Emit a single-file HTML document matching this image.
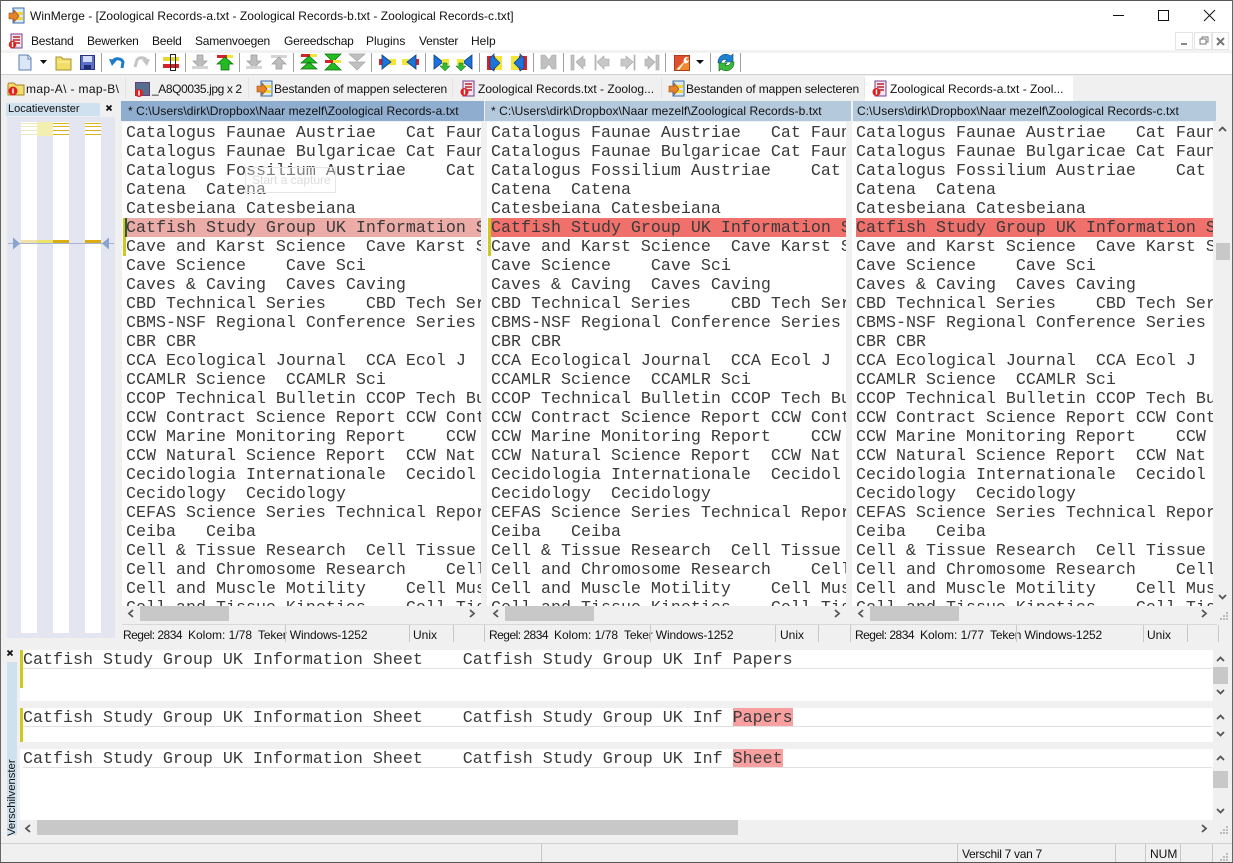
<!DOCTYPE html>
<html lang="nl"><head><meta charset="utf-8"><title>WinMerge</title>
<style>
html,body{margin:0;padding:0;background:#f0f0f0}
#w{position:relative;width:1233px;height:863px;overflow:hidden;background:#f0f0f0;font:12px/16px "Liberation Sans",sans-serif;color:#111}
#w div,#w pre,#w span.a,#w svg.a{position:absolute}
.u{white-space:nowrap}
.m{letter-spacing:-.22px}
.r{letter-spacing:-.52px}
.t{letter-spacing:-.15px}
pre{margin:0;font:16.66px/19px "Liberation Mono",monospace;color:#3a3a3a;white-space:pre;overflow:hidden}
.hd{top:101px;height:20px;line-height:20px;white-space:nowrap;overflow:hidden;font-size:12px;letter-spacing:.065px}
.sep{width:1px;background:#c8c8c8}
.tsep{top:53px;height:19px;width:1px;background:#a0a0a0}
.tabsep{top:78px;height:20px;width:1px;background:#e4e4e4}
.thumb{background:#c8c8c8}
</style></head><body><div id="w">

<!-- window frame -->
<div style="left:0;top:0;width:1233px;height:1px;background:#555"></div>
<div style="left:0;top:1px;width:1233px;height:49px;background:#fff"></div>
<div style="left:0;top:50px;width:1233px;height:3px;background:#f2f2f2"></div>
<div style="left:0;top:53px;width:1233px;height:21px;background:#fff"></div>
<div style="left:0;top:74px;width:1233px;height:1px;background:#d0d0d0"></div>
<div style="left:0;top:0;width:1px;height:863px;background:#666"></div>
<div style="left:1232px;top:0;width:1px;height:863px;background:#666"></div>
<div style="left:0;top:862px;width:1233px;height:1px;background:#555"></div>

<!-- title -->
<svg class="a" style="left:8px;top:7px" width="18" height="18" viewBox="0 0 18 18"><rect x="5" y="1" width="11" height="15" fill="#dbe8f6" stroke="#3d6ea8"/><rect x="8" y="5" width="7" height="3" fill="#f2d33a"/><rect x="8" y="10" width="7" height="3" fill="#f2d33a"/><path d="M1 6h5V3l5 6-5 6v-3H1z" fill="#e8822a" stroke="#8a4a16" stroke-width=".6"/></svg>
<div class="u" style="left:30px;top:8px;font-size:12px;letter-spacing:.03px">WinMerge - [Zoological Records-a.txt - Zoological Records-b.txt - Zoological Records-c.txt]</div>
<svg class="a" style="left:1100px;top:5px" width="125" height="20" viewBox="0 0 125 20" fill="none" stroke="#111"><path d="M13 10.500h11"/><rect x="58.500" y="5.500" width="10" height="10"/><path d="M104 5l11 11M115 5l-11 11"/></svg>

<!-- menu -->
<svg class="a" style="left:8px;top:33px" width="16" height="16" viewBox="0 0 16 16"><rect x="3" y="1" width="11" height="14" fill="#f3e6f0" stroke="#7a3b8a"/><path d="M5 4h7M5 7h7M5 10h7" stroke="#b22" stroke-width="1.400"/><circle cx="4.500" cy="11.500" r="3.800" fill="#d22"/><path d="M4.500 9v5" stroke="#fff" stroke-width="1.400"/></svg>
<div class="u m" style="left:31px;top:33px">Bestand</div>
<div class="u m" style="left:87px;top:33px">Bewerken</div>
<div class="u m" style="left:152px;top:33px">Beeld</div>
<div class="u m" style="left:195px;top:33px">Samenvoegen</div>
<div class="u m" style="left:284px;top:33px">Gereedschap</div>
<div class="u" style="left:366px;top:33px">Plugins</div>
<div class="u m" style="left:419px;top:33px">Venster</div>
<div class="u" style="left:471px;top:33px">Help</div>
<!-- mdi buttons -->
<svg class="a" style="left:1175px;top:31px" width="54" height="20" viewBox="0 0 54 20" fill="none"><rect x=".5" y="1.500" width="17" height="17" stroke="#e4e4e4"/><rect x="19.500" y="1.500" width="17" height="17" stroke="#e4e4e4"/><rect x="37.500" y="1.500" width="16" height="17" stroke="#e4e4e4"/><path d="M6 13h6" stroke="#888" stroke-width="2"/><path d="M25 8h6v5h-6zM27 8V6h6v5h-2" stroke="#777"/><path d="M42 7l7 7M49 7l-7 7" stroke="#777" stroke-width="2"/></svg>

<!-- toolbar -->
<svg class="a" style="left:0;top:50px" width="760" height="24" viewBox="0 0 760 24">
<defs>
<g id="gd"><path d="M-3-7h6v6h4l-7 7-7-7h4z" fill="#bdbdbd" stroke="#9a9a9a" stroke-width=".7"/><path d="M-8 4h16v3h-16z" fill="#d4d4d4"/></g>
<g id="gu"><path d="M-8-7h16v3h-16z" fill="#d4d4d4"/><path d="M0-5l7 7h-4v5h-6V2h-4z" fill="#bdbdbd" stroke="#9a9a9a" stroke-width=".7"/></g>
<g id="br"><rect x="-8" y="-3" width="5" height="6" fill="#d9232b"/><rect x="2" y="-3" width="7" height="6" fill="#f2e638"/><path d="M-5-7v14l9-7z" fill="#1e73d8" stroke="#0d3f86" stroke-width=".8"/></g>
</defs>
<!-- new -->
<path d="M19 5h9l3 3v12H19z" fill="#dbe6f6" stroke="#5b7fb5"/><path d="M28 5v4h3" fill="#fff" stroke="#5b7fb5"/>
<path d="M40 10h7l-3.500 4z" fill="#111"/>
<!-- open -->
<path d="M56 7v13h15V9h-8l-2-2z" fill="#f0dd6a" stroke="#a8902a"/><path d="M57 12h13" stroke="#fff4a8"/>
<!-- save -->
<rect x="80.500" y="5.500" width="14" height="14" fill="#5a6fc8" stroke="#27337f"/><rect x="83" y="6" width="9" height="6" fill="#d5dcf7"/><rect x="84" y="15" width="7" height="4" fill="#1e2a72"/>
<!-- undo/redo -->
<path d="M113 11a5.500 4.500 0 0 1 10 1l-1 6" fill="none" stroke="#1d7bc8" stroke-width="3"/><path d="M109 9l8 1-5 6z" fill="#1d7bc8"/>
<path d="M147 11a5.500 4.500 0 0 0-10-1l-2 7" fill="none" stroke="#c4c4c4" stroke-width="3"/><path d="M150 9l-8 1 5 6z" fill="#c4c4c4"/>
<!-- options -->
<rect x="163" y="7" width="16" height="4" fill="#e8d92e"/><rect x="163" y="14" width="16" height="4" fill="#d32228"/><rect x="170.500" y="4.500" width="5" height="16" fill="none" stroke="#222"/>
<!-- down gray / up green -->
<use href="#gd" x="200" y="12"/>
<path d="M217 5h10v3h-10z" fill="#d32228"/><path d="M227 5h6v3h-6z" fill="#f2e638"/>
<path d="M225 7l8 7h-4v6h-8v-6h-4z" fill="#22bb22" stroke="#0a6a0a" stroke-width=".7"/>
<use href="#gd" x="254" y="12"/><use href="#gu" x="279" y="12"/>
<!-- green triple -->
<path d="M301 4h9v3h-9z" fill="#d32228"/><path d="M310 4h7v3h-7z" fill="#f2e638"/><path d="M309 6l8 7h-16zM309 12l8 7h-16z" fill="#22bb22" stroke="#0a6a0a" stroke-width=".7"/>
<path d="M325 4h16l-8 8zM325 20h16l-8-8z" fill="#22bb22" stroke="#0a6a0a" stroke-width=".7"/><path d="M325 10h8v3h-8z" fill="#d32228"/><path d="M333 10h8v3h-8z" fill="#f2e638"/>
<path d="M349 4h16l-8 7zM349 12h16l-8 8z" fill="#c0c0c0" stroke="#a4a4a4" stroke-width=".7"/>
<!-- blue arrows -->
<use href="#br" transform="translate(387 12)"/><use href="#br" transform="translate(411 12) scale(-1 1)"/>
<path d="M434 5v14l9-7z" fill="#1e73d8" stroke="#0d3f86" stroke-width=".8"/><rect x="442" y="9" width="7" height="6" fill="#f2e638"/><path d="M443 13h4v3h3l-5 5-5-5h3z" fill="#33bb33" stroke="#0a6a0a" stroke-width=".5"/>
<path d="M472 5v14l-9-7z" fill="#1e73d8" stroke="#0d3f86" stroke-width=".8"/><rect x="457" y="9" width="7" height="6" fill="#f2e638"/><path d="M459 13h4v3h3l-5 5-5-5h3z" fill="#33bb33" stroke="#0a6a0a" stroke-width=".5"/>
<!-- red-blue-yellow -->
<rect x="487" y="6" width="8" height="14" fill="#d32228"/><rect x="495" y="6" width="7" height="14" fill="#f2e638"/><path d="M490 8l4-4v4h1l5 5-5 5h-1v3l-4-3z" fill="#1e73d8" stroke="#0d3f86" stroke-width=".7"/>
<rect x="511" y="6" width="8" height="14" fill="#f2e638"/><rect x="519" y="6" width="8" height="14" fill="#d32228"/><path d="M524 8l-4-4v4h-1l-5 5 5 5h1v3l4-3z" fill="#1e73d8" stroke="#0d3f86" stroke-width=".7"/>
<!-- gray -->
<path d="M541 5h4l4 5 3-5h4v14h-4l-3-5-4 5h-4z" fill="#c0c0c0" stroke="#a8a8a8" stroke-width=".6"/>
<path d="M571 5h3v15h-3zM576 12l7-6v3h2v7h-2v3z" fill="#c2c2c2" stroke="#a4a4a4" stroke-width=".6"/>
<path d="M595 5h1v15h-1zM597 12l7-6v3h5v7h-5v3z" fill="#c8c8c8" stroke="#a4a4a4" stroke-width=".6"/>
<path d="M634 5h1v15h-1zM633 12l-7-6v3h-5v7h5v3z" fill="#c8c8c8" stroke="#a4a4a4" stroke-width=".6"/>
<path d="M656 5h3v15h-3zM655 12l-7-6v3h-3v7h3v3z" fill="#c2c2c2" stroke="#a4a4a4" stroke-width=".6"/>
<!-- wrench -->
<rect x="674.500" y="5.500" width="15" height="15" fill="#ee8a2c" stroke="#b03a20"/><path d="M675 6h14L675 20z" fill="#e0502c"/><path d="M677 19l7-7a3.500 3.500 0 0 1 4-5l-2 2 1 2 2-1a3.500 3.500 0 0 1-5 3l-5 7z" fill="#fff"/>
<path d="M696 10h8l-4 4z" fill="#111"/>
<!-- refresh -->
<path d="M718 13a8 8 0 0 1 13-7l2-2v8h-8l2-2a4 4 0 0 0-6 3z" fill="#1f80d0" stroke="#0d4f88" stroke-width=".6"/><path d="M734 12a8 8 0 0 1-13 7l-2 2v-8h8l-2 2a4 4 0 0 0 6-3z" fill="#3cb83c" stroke="#0d6a0d" stroke-width=".6"/>
</svg>
<div class="tsep" style="left:101px"></div><div class="tsep" style="left:155px"></div><div class="tsep" style="left:185px"></div><div class="tsep" style="left:239px"></div><div class="tsep" style="left:293px"></div><div class="tsep" style="left:371px"></div><div class="tsep" style="left:425px"></div><div class="tsep" style="left:479px"></div><div class="tsep" style="left:533px"></div><div class="tsep" style="left:563px"></div><div class="tsep" style="left:665px"></div><div class="tsep" style="left:710px"></div><div class="tsep" style="left:740px"></div>

<!-- tabs -->
<div style="left:865px;top:76px;width:208px;height:25px;background:#fff"></div>
<div class="tabsep" style="left:125px"></div><div class="tabsep" style="left:248px"></div><div class="tabsep" style="left:452px"></div><div class="tabsep" style="left:661px"></div><div class="tabsep" style="left:864px"></div>
<svg class="a" style="left:0;top:78px" width="900" height="22" viewBox="0 0 900 22">
<defs>
<g id="tb"><rect x="5" y="3" width="11" height="15" fill="#dbe8f6" stroke="#3d6ea8"/><rect x="8" y="7" width="7" height="3" fill="#f2d33a"/><rect x="8" y="12" width="7" height="3" fill="#f2d33a"/><path d="M1 8h5V5l5 6-5 6v-3H1z" fill="#e8822a" stroke="#8a4a16" stroke-width=".6"/></g>
<g id="td"><rect x="3" y="3" width="11" height="15" fill="#f3e6f0" stroke="#7a3b8a"/><path d="M5 6h7M5 9h7M5 12h7" stroke="#b22" stroke-width="1.400"/><circle cx="4.500" cy="14" r="4" fill="#d22"/><path d="M4.500 11.500v5" stroke="#fff" stroke-width="1.400"/></g>
</defs>
<path d="M8 6v11h16V7h-8l-2-2H9z" fill="#f0dd6a" stroke="#a8802a"/><circle cx="13" cy="13" r="4.500" fill="#d22"/><path d="M13 10.500v5" stroke="#fff" stroke-width="1.400"/>
<rect x="135.500" y="4.500" width="14" height="13" fill="#54708e" stroke="#6a3b7a"/><circle cx="139" cy="15" r="4" fill="#d22"/><path d="M139 12.500v5" stroke="#fff" stroke-width="1.400"/>
<use href="#tb" x="256"/><use href="#td" x="460"/><use href="#tb" x="668"/><use href="#td" x="872"/>
</svg>
<div class="u" style="left:26px;top:81px;letter-spacing:.35px">map-A\ - map-B\</div>
<div class="u" style="left:152px;top:81px;letter-spacing:-.4px">_A8Q0035.jpg x 2</div>
<div class="u" style="left:274px;top:81px;letter-spacing:-.1px">Bestanden of mappen selecteren</div>
<div class="u" style="left:478px;top:81px">Zoological Records.txt - Zoolog...</div>
<div class="u" style="left:686px;top:81px;letter-spacing:-.1px">Bestanden of mappen selecteren</div>
<div class="u" style="left:890px;top:81px">Zoological Records-a.txt - Zool...</div>

<!-- location pane -->
<div class="u" style="left:6px;top:103px;width:94px;height:13px;line-height:13px;background:#cfe0ee;font-size:11px;padding-left:2px;box-sizing:border-box">Locatievenster</div>
<svg class="a" style="left:105px;top:104px" width="9" height="9" viewBox="0 0 9 9"><path d="M1.500 1.500l5 5M6.500 1.500l-5 5" stroke="#111" stroke-width="1.800"/></svg>
<div style="left:7px;top:117px;width:108px;height:521px;background:#e3e5f1"></div>
<div style="left:21px;top:122px;width:16px;height:511px;background:#fff"></div>
<div style="left:53px;top:122px;width:16px;height:511px;background:#fff"></div>
<div style="left:85px;top:122px;width:16px;height:511px;background:#fff"></div>
<div style="left:37px;top:122px;width:16px;height:14px;background:#f3efb0"></div>
<svg class="a" style="left:21px;top:122px" width="80" height="14" viewBox="0 0 80 14"><path d="M0 1.500h16M0 4.500h16M0 8.500h16M0 12.500h16" stroke="#eee8c0"/><path d="M32 1.500h16M32 4.500h16M32 8.500h16M32 12.500h16M64 1.500h16M64 4.500h16M64 8.500h16M64 12.500h16" stroke="#dcb41e"/></svg>
<div style="left:21px;top:240px;width:16px;height:3px;background:#efe3a8"></div>
<div style="left:37px;top:240px;width:16px;height:3px;background:#ece46a"></div>
<div style="left:53px;top:240px;width:16px;height:3px;background:#dcac14"></div>
<div style="left:85px;top:240px;width:16px;height:3px;background:#dcac14"></div>
<div style="left:8px;top:243px;width:106px;height:1px;background:#a8b4d4"></div>
<svg class="a" style="left:8px;top:237px" width="106" height="13" viewBox="0 0 106 13"><path d="M5 0.500l7 6-7 6zM101 0.500l-7 6 7 6z" fill="#8ba3cc"/></svg>

<!-- pane headers -->
<div class="hd" style="left:121px;width:363px;background:#8fadcf;padding-left:7px;box-sizing:border-box">* C:\Users\dirk\Dropbox\Naar mezelf\Zoological Records-a.txt</div>
<div class="hd" style="left:485px;width:366px;background:#b5c9dc;padding-left:6px;box-sizing:border-box">* C:\Users\dirk\Dropbox\Naar mezelf\Zoological Records-b.txt</div>
<div class="hd" style="left:853px;width:363px;background:#b5c9dc;padding-left:4px;box-sizing:border-box">C:\Users\dirk\Dropbox\Naar mezelf\Zoological Records-c.txt</div>

<!-- text panes backgrounds -->
<div style="left:122px;top:122px;width:359px;height:484px;background:#fff"></div>
<div style="left:487px;top:122px;width:359px;height:484px;background:#fff"></div>
<div style="left:852px;top:122px;width:361px;height:484px;background:#fff"></div>
<div style="left:126px;top:218px;width:355px;height:19px;background:#ecaca8"></div>
<div style="left:491px;top:218px;width:355px;height:19px;background:#f0706c"></div>
<div style="left:856px;top:218px;width:357px;height:19px;background:#f0706c"></div>
<div style="left:123px;top:218px;width:3px;height:38px;background:#cfc81e"></div>
<div style="left:488px;top:218px;width:3px;height:38px;background:#cfc81e"></div>
<div style="left:125px;top:218px;width:2px;height:19px;background:#2f5a35"></div>

<pre style="left:126px;top:124px;width:355px;height:482px">Catalogus Faunae Austriae   Cat Faun
Catalogus Faunae Bulgaricae Cat Faun
Catalogus Fossilium Austriae    Cat Foss
Catena  Catena
Catesbeiana Catesbeiana
Catfish Study Group UK Information Sheet
Cave and Karst Science  Cave Karst Sci
Cave Science    Cave Sci
Caves &amp; Caving  Caves Caving
CBD Technical Series    CBD Tech Ser
CBMS-NSF Regional Conference Series
CBR CBR
CCA Ecological Journal  CCA Ecol J
CCAMLR Science  CCAMLR Sci
CCOP Technical Bulletin CCOP Tech Bull
CCW Contract Science Report CCW Cont
CCW Marine Monitoring Report    CCW Mar
CCW Natural Science Report  CCW Nat
Cecidologia Internationale  Cecidol
Cecidology  Cecidology
CEFAS Science Series Technical Report
Ceiba   Ceiba
Cell &amp; Tissue Research  Cell Tissue
Cell and Chromosome Research    Cell
Cell and Muscle Motility    Cell Mus
Cell and Tissue Kinetics    Cell Tis</pre>
<pre style="left:491px;top:124px;width:355px;height:482px">Catalogus Faunae Austriae   Cat Faun
Catalogus Faunae Bulgaricae Cat Faun
Catalogus Fossilium Austriae    Cat Foss
Catena  Catena
Catesbeiana Catesbeiana
Catfish Study Group UK Information Sheet
Cave and Karst Science  Cave Karst Sci
Cave Science    Cave Sci
Caves &amp; Caving  Caves Caving
CBD Technical Series    CBD Tech Ser
CBMS-NSF Regional Conference Series
CBR CBR
CCA Ecological Journal  CCA Ecol J
CCAMLR Science  CCAMLR Sci
CCOP Technical Bulletin CCOP Tech Bull
CCW Contract Science Report CCW Cont
CCW Marine Monitoring Report    CCW Mar
CCW Natural Science Report  CCW Nat
Cecidologia Internationale  Cecidol
Cecidology  Cecidology
CEFAS Science Series Technical Report
Ceiba   Ceiba
Cell &amp; Tissue Research  Cell Tissue
Cell and Chromosome Research    Cell
Cell and Muscle Motility    Cell Mus
Cell and Tissue Kinetics    Cell Tis</pre>
<pre style="left:856px;top:124px;width:357px;height:482px">Catalogus Faunae Austriae   Cat Faun
Catalogus Faunae Bulgaricae Cat Faun
Catalogus Fossilium Austriae    Cat Foss
Catena  Catena
Catesbeiana Catesbeiana
Catfish Study Group UK Information Sheet
Cave and Karst Science  Cave Karst Sci
Cave Science    Cave Sci
Caves &amp; Caving  Caves Caving
CBD Technical Series    CBD Tech Ser
CBMS-NSF Regional Conference Series
CBR CBR
CCA Ecological Journal  CCA Ecol J
CCAMLR Science  CCAMLR Sci
CCOP Technical Bulletin CCOP Tech Bull
CCW Contract Science Report CCW Cont
CCW Marine Monitoring Report    CCW Mar
CCW Natural Science Report  CCW Nat
Cecidologia Internationale  Cecidol
Cecidology  Cecidology
CEFAS Science Series Technical Report
Ceiba   Ceiba
Cell &amp; Tissue Research  Cell Tissue
Cell and Chromosome Research    Cell
Cell and Muscle Motility    Cell Mus
Cell and Tissue Kinetics    Cell Tis</pre>

<!-- capture ghost -->
<div class="u" style="left:245px;top:167px;width:83px;height:24px;border:1px solid #e6e6e6;line-height:24px;color:#dcdcdc;padding-left:6px;box-sizing:content-box;background:rgba(255,255,255,.35);font-size:12px;overflow:hidden">Start a capture</div>

<!-- h scrollbars -->
<div class="thumb" style="left:140px;top:606px;width:89px;height:15px"></div>
<div class="thumb" style="left:505px;top:606px;width:89px;height:15px"></div>
<div class="thumb" style="left:870px;top:606px;width:89px;height:15px"></div>
<div class="thumb" style="left:1216px;top:243px;width:14px;height:17px"></div>
<svg class="a" style="left:0;top:0" width="1233" height="863" viewBox="0 0 1233 863" fill="none" stroke="#555" stroke-width="1.800">
<path d="M133 610l-4 3.500 4 3.500M470 610l4 3.500-4 3.500M498 610l-4 3.500 4 3.500M835 610l4 3.500-4 3.500M863 610l-4 3.500 4 3.500M1202 610l4 3.500-4 3.500"/>
<path d="M1219 131l3.500-3.500 3.500 3.500M1219 595l3.500 3.500 3.500-3.500"/>
<path d="M1217 661l3.500-3.500 3.500 3.500M1217 690l3.500 3.500 3.500-3.500M1217 719l3.500-3.500 3.500 3.500M1217 732l3.500 3.500 3.500-3.500M1217 760l3.500-3.500 3.500 3.500M1217 809l3.500 3.500 3.500-3.500"/>
<path d="M30 825l-4 3.500 4 3.500M1202 825l4 3.500-4 3.500"/>
</svg>

<!-- pane status -->
<div style="left:122px;top:624px;width:1095px;height:1px;background:#d8d8d8"></div>
<div class="u r" style="left:123px;top:627px">Regel: 2834</div><div class="u" style="left:188px;top:627px">Kolom: 1/78</div><div class="u t" style="left:258px;top:627px">Teker Windows-1252</div><div class="u" style="left:413px;top:627px">Unix</div>
<div class="u r" style="left:489px;top:627px">Regel: 2834</div><div class="u" style="left:554px;top:627px">Kolom: 1/78</div><div class="u t" style="left:624px;top:627px">Teker Windows-1252</div><div class="u" style="left:780px;top:627px">Unix</div>
<div class="u r" style="left:855px;top:627px">Regel: 2834</div><div class="u" style="left:920px;top:627px">Kolom: 1/77</div><div class="u t" style="left:990px;top:627px">Teken Windows-1252</div><div class="u" style="left:1147px;top:627px">Unix</div>
<div class="sep" style="left:285px;top:625px;height:17px"></div><div class="sep" style="left:409px;top:625px;height:17px"></div><div class="sep" style="left:453px;top:625px;height:17px"></div><div class="sep" style="left:484px;top:625px;height:17px"></div>
<div class="sep" style="left:650px;top:625px;height:17px"></div><div class="sep" style="left:775px;top:625px;height:17px"></div><div class="sep" style="left:818px;top:625px;height:17px"></div><div class="sep" style="left:850px;top:625px;height:17px"></div>
<div class="sep" style="left:1016px;top:625px;height:17px"></div><div class="sep" style="left:1143px;top:625px;height:17px"></div><div class="sep" style="left:1187px;top:625px;height:17px"></div><div class="sep" style="left:1218px;top:625px;height:17px"></div>

<!-- diff pane -->
<svg class="a" style="left:6px;top:649px" width="9" height="9" viewBox="0 0 9 9"><path d="M1.500 1.500l5 5M6.500 1.500l-5 5" stroke="#111" stroke-width="1.800"/></svg>
<div style="left:7px;top:662px;width:10px;height:173px;background:#cfe0ee"></div>
<div class="u" style="left:5px;top:836px;width:173px;height:14px;line-height:14px;font-size:11.300px;transform-origin:0 0;transform:rotate(-90deg)">Verschilvenster</div>

<div style="left:20px;top:650px;width:1193px;height:51px;background:#fff"></div>
<div style="left:20px;top:708px;width:1193px;height:34px;background:#fff"></div>
<div style="left:20px;top:749px;width:1193px;height:71px;background:#fff"></div>
<div style="left:23px;top:668px;width:1189px;height:1px;background:#e0e0e0"></div>
<div style="left:23px;top:726px;width:1189px;height:1px;background:#e0e0e0"></div>
<div style="left:23px;top:767px;width:1189px;height:1px;background:#e0e0e0"></div>
<div style="left:20px;top:650px;width:3px;height:38px;background:#cfc81e"></div>
<div style="left:20px;top:708px;width:3px;height:34px;background:#cfc81e"></div>
<div style="left:733px;top:708px;width:60px;height:18px;background:#f8a0a0"></div>
<div style="left:733px;top:749px;width:50px;height:18px;background:#f8a0a0"></div>
<pre style="left:23px;top:651px;height:19px;width:1180px">Catfish Study Group UK Information Sheet    Catfish Study Group UK Inf Papers</pre>
<pre style="left:23px;top:709px;height:19px;width:1180px">Catfish Study Group UK Information Sheet    Catfish Study Group UK Inf Papers</pre>
<pre style="left:23px;top:750px;height:19px;width:1180px">Catfish Study Group UK Information Sheet    Catfish Study Group UK Inf Sheet</pre>
<div class="thumb" style="left:1213px;top:667px;width:15px;height:17px"></div>
<div class="thumb" style="left:1213px;top:771px;width:15px;height:17px"></div>
<div class="thumb" style="left:37px;top:820px;width:701px;height:15px"></div>

<!-- main status -->
<div style="left:1px;top:843px;width:1231px;height:1px;background:#d0d0d0"></div>
<div class="sep" style="left:541px;top:844px;height:18px"></div><div class="sep" style="left:957px;top:844px;height:18px"></div><div class="sep" style="left:1115px;top:844px;height:18px"></div><div class="sep" style="left:1145px;top:844px;height:18px"></div><div class="sep" style="left:1180px;top:844px;height:18px"></div><div class="sep" style="left:1212px;top:844px;height:18px"></div>
<div class="u" style="left:962px;top:846px;letter-spacing:-.3px">Verschil 7 van 7</div>
<div class="u" style="left:1150px;top:846px">NUM</div>

<!-- grips -->
<svg class="a" style="left:0;top:0" width="1233" height="863" viewBox="0 0 1233 863" fill="#bbb"><path d="M1226 612h2v2h-2zM1223 615h2v2h-2zM1226 615h2v2h-2zM1220 618h2v2h-2zM1223 618h2v2h-2zM1226 618h2v2h-2zM1226 826h2v2h-2zM1223 829h2v2h-2zM1226 829h2v2h-2zM1220 832h2v2h-2zM1223 832h2v2h-2zM1226 832h2v2h-2zM1226 853h2v2h-2zM1223 856h2v2h-2zM1226 856h2v2h-2zM1220 859h2v2h-2zM1223 859h2v2h-2zM1226 859h2v2h-2z"/></svg>
</div></body></html>
